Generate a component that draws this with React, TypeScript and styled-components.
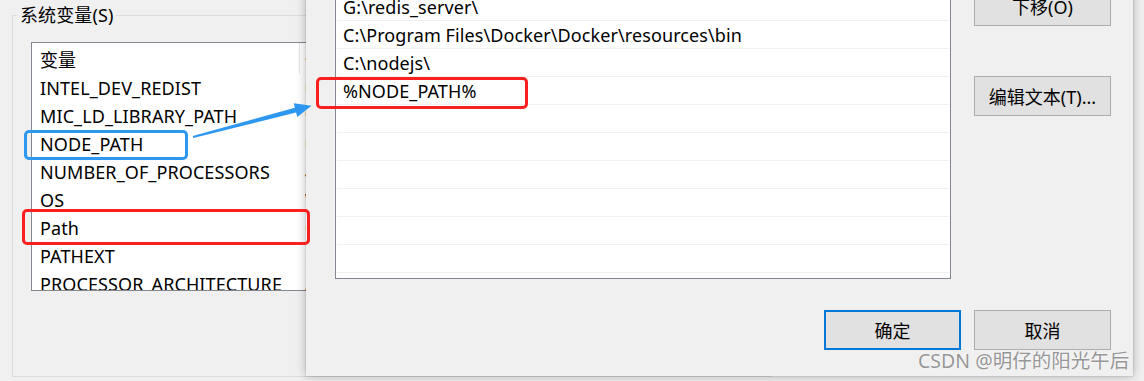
import React from 'react';
import styled, { createGlobalStyle } from 'styled-components';

const GlobalStyle = createGlobalStyle`
  html, body { margin: 0; padding: 0; background: #f0f0f0; }
  body { font-family: "Noto Sans", "Noto Sans CJK SC", sans-serif; }
`;

const Stage = styled.div`
  position: relative;
  width: 1144px;
  height: 381px;
  overflow: hidden;
  background: #f0f0f0;
  font-family: "Noto Sans", "Noto Sans CJK SC", sans-serif;
  font-size: 18px;
  letter-spacing: 0.1px;
  color: #000;
`;

/* ---------- window behind ---------- */
const BackWindow = styled.div`
  padding: 3px 0 0 12px;
`;

const GroupBox = styled.fieldset`
  margin: 0;
  padding: 0 0 0 4px;
  width: 760px;
  height: 374px;
  box-sizing: border-box;
  border: 1px solid #dcdcdc;
  min-inline-size: 0;
`;

const GroupLegend = styled.legend`
  padding: 0 3px;
  font-size: 18px;
  line-height: 24px;
  color: #000;
`;

const VarList = styled.div`
  margin: 15px 0 0 14px;
  width: 560px;
  height: 249px;
  box-sizing: border-box;
  border: 1px solid #828790;
  background: #fff;
  overflow: hidden;
`;

const VarRow = styled.div<{ $header?: boolean }>`
  display: grid;
  grid-template-columns: 268px 1fr;
  height: ${p => (p.$header ? 31 : 28)}px;
  align-items: center;
  white-space: nowrap;
`;

const NameCell = styled.div<{ $header?: boolean }>`
  padding-left: 8px;
  height: 100%;
  display: flex;
  align-items: center;
  box-sizing: border-box;
  overflow: hidden;
  border-right: 1px solid ${p => (p.$header ? '#e5e5e5' : 'transparent')};
`;

const ValueCell = styled.div`
  padding-left: 5px;
  overflow: hidden;
`;

/* ---------- edit dialog ---------- */
const Dialog = styled.div`
  position: absolute;
  left: 306px;
  top: -330px;
  width: 827px;
  height: 706px;
  box-sizing: border-box;
  background: #f0f0f0;
  box-shadow: 0 0 10px rgba(0, 0, 0, 0.28), 0 0 0 1px rgba(0, 0, 0, 0.06);
  display: grid;
  grid-template-columns: 616px 137px;
  grid-template-rows: 595px auto;
  column-gap: 23px;
  row-gap: 31px;
  padding: 14px 0 0 29px;
`;

const PathList = styled.div`
  box-sizing: border-box;
  border: 1px solid #828790;
  background: #fff;
  padding: 0 1px;
  overflow: hidden;
`;

const PathRow = styled.div`
  height: 28px;
  box-sizing: border-box;
  border-bottom: 1px solid #f0f0f0;
  padding-left: 6px;
  display: flex;
  align-items: center;
  white-space: nowrap;
  overflow: hidden;
`;

const ButtonColumn = styled.div`
  display: flex;
  flex-direction: column;
  gap: 10px;
`;

const Button = styled.button<{ $default?: boolean; $gapBefore?: number }>`
  width: 137px;
  height: 40px;
  box-sizing: border-box;
  margin: ${p => (p.$gapBefore ? `${p.$gapBefore - 10}px` : '0')} 0 0 0;
  padding: 0;
  background: #e1e1e1;
  border: ${p => (p.$default ? '2px solid #0078d7' : '1px solid #adadad')};
  font-family: "Noto Sans", "Noto Sans CJK SC", sans-serif;
  font-size: 18px;
  color: #000;
  flex: none;
`;

const Footer = styled.div`
  grid-column: 1 / -1;
  display: flex;
  justify-content: flex-end;
  gap: 13px;
`;

/* ---------- annotations ---------- */
const Mark = styled.div<{ $x: number; $y: number; $w: number; $h: number; $color: string }>`
  position: absolute;
  left: ${p => p.$x}px;
  top: ${p => p.$y}px;
  width: ${p => p.$w}px;
  height: ${p => p.$h}px;
  box-sizing: border-box;
  border: 3px solid ${p => p.$color};
  border-radius: 5px;
  pointer-events: none;
`;

const Overlay = styled.svg`
  position: absolute;
  left: 0;
  top: 0;
  pointer-events: none;
`;

const Watermark = styled.div`
  position: absolute;
  left: 918px;
  top: 348px;
  font-family: "Noto Sans", "Noto Sans CJK SC", sans-serif;
  font-size: 19.5px;
  line-height: 26px;
  letter-spacing: 0;
  color: #969696;
  text-shadow: 0 0 2px #fff, 0 0 1px #fff;
  white-space: nowrap;
`;

const vars: [string, string][] = [
  ['INTEL_DEV_REDIST', 'C:\\Program Files (x86)\\Common Files\\Intel\\Shared Libraries\\'],
  ['MIC_LD_LIBRARY_PATH', '%INTEL_DEV_REDIST%compiler\\lib\\mic'],
  ['NODE_PATH', 'C:\\nodejs\\node_global\\node_modules'],
  ['NUMBER_OF_PROCESSORS', '4'],
  ['OS', 'Windows_NT'],
  ['Path', 'C:\\Program Files (x86)\\Common Files\\Oracle\\Java\\javapath'],
  ['PATHEXT', '.COM;.EXE;.BAT;.CMD;.VBS;.VBE;.JS;.JSE;.WSF;.WSH;.MSC'],
  ['PROCESSOR_ARCHITECTURE', 'AMD64'],
  ['PROCESSOR_IDENTIFIER', 'Intel64 Family 6'],
];

const paths: string[] = [
  '%SystemRoot%\\system32',
  '%SystemRoot%',
  '%SystemRoot%\\System32\\Wbem',
  '%SYSTEMROOT%\\System32\\WindowsPowerShell\\v1.0\\',
  '%SYSTEMROOT%\\System32\\OpenSSH\\',
  'C:\\Program Files\\Git\\cmd',
  'C:\\Program Files\\MySQL\\MySQL Server 8.0\\bin',
  'C:\\Program Files (x86)\\Intel\\Intel(R) Management Engine Components\\DAL',
  'C:\\Program Files\\Intel\\Intel(R) Management Engine Components\\DAL',
  '%JAVA_HOME%\\bin',
  'C:\\Program Files\\nodejs\\',
  'G:\\redis_server\\',
  'C:\\Program Files\\Docker\\Docker\\resources\\bin',
  'C:\\nodejs\\',
  '%NODE_PATH%',
];

const TOTAL_ROWS = 23;

export default function App() {
  const rows = Array.from({ length: TOTAL_ROWS }, (_, i) => paths[i] ?? '');
  return (
    <Stage>
      <GlobalStyle />
      <BackWindow>
        <GroupBox>
          <GroupLegend>系统变量(S)</GroupLegend>
          <VarList>
            <VarRow $header>
              <NameCell $header>变量</NameCell>
              <ValueCell>值</ValueCell>
            </VarRow>
            {vars.map(([n, v]) => (
              <VarRow key={n}>
                <NameCell>{n}</NameCell>
                <ValueCell>{v}</ValueCell>
              </VarRow>
            ))}
          </VarList>
        </GroupBox>
      </BackWindow>

      <Dialog>
        <PathList>
          {rows.map((p, i) => (
            <PathRow key={i}>{p}</PathRow>
          ))}
        </PathList>
        <ButtonColumn>
          <Button>新建(N)</Button>
          <Button>编辑(E)</Button>
          <Button>浏览(B)...</Button>
          <Button>删除(D)</Button>
          <Button $gapBefore={62}>上移(U)</Button>
          <Button>下移(O)</Button>
          <Button $gapBefore={50}>编辑文本(T)...</Button>
        </ButtonColumn>
        <Footer>
          <Button $default>确定</Button>
          <Button>取消</Button>
        </Footer>
      </Dialog>

      <Mark $x={24} $y={130} $w={164} $h={30} $color="#2e97f0" />
      <Mark $x={22} $y={209} $w={288} $h={36} $color="#fb2020" />
      <Mark $x={316} $y={77} $w={212} $h={32} $color="#fb2020" />
      <Overlay width={1144} height={381} viewBox="0 0 1144 381">
        <polygon
          points="193.3,138.0 296.1,112.5 297.3,116.9 311.5,105.8 293.7,103.3 294.9,107.7 192.7,136.0"
          fill="#2e97f0"
        />
      </Overlay>

      <Watermark>CSDN @明仔的阳光午后</Watermark>
    </Stage>
  );
}
